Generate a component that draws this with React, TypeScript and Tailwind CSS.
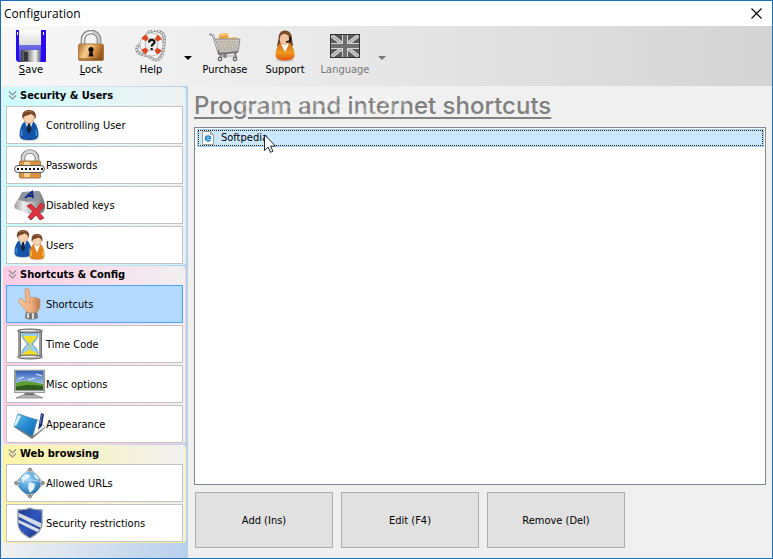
import type { ReactNode } from "react";

/* ---------- Toolbar icons ---------- */

function SaveIcon() {
  return (
    <svg width="32" height="32" viewBox="0 0 32 32">
      <defs>
        <linearGradient id="shutter" x1="0" x2="1">
          <stop offset="0" stopColor="#444" />
          <stop offset="0.45" stopColor="#999" />
          <stop offset="0.75" stopColor="#f5f5f5" />
          <stop offset="1" stopColor="#777" />
        </linearGradient>
        <linearGradient id="disk" x1="0" y1="0" x2="0" y2="1">
          <stop offset="0" stopColor="#6f6fe8" />
          <stop offset="1" stopColor="#3d3dc4" />
        </linearGradient>
        <linearGradient id="paper" x1="0" y1="0" x2="0" y2="1">
          <stop offset="0" stopColor="#fdfdfd" />
          <stop offset="1" stopColor="#dcdcdc" />
        </linearGradient>
      </defs>
      <path d="M1 0h30v32H3l-2-2z" fill="#2a08f0" />
      <path d="M4 0h22v15H4z" fill="url(#paper)" />
      <path d="M4 15h22v17H4z" fill="url(#disk)" />
      <path d="M6 20h19v12H6z" fill="url(#shutter)" />
      <path d="M9 22h4v9H9z" fill="#35353f" />
      <path d="M2 2h1v3H2zM28 2h1v3h-1z" fill="#fff" />
    </svg>
  );
}

function LockIcon() {
  return (
    <svg width="32" height="32" viewBox="0 0 32 32">
      <defs>
        <linearGradient id="brass" x1="0" y1="0" x2="1" y2="0.3">
          <stop offset="0" stopColor="#ad6927" />
          <stop offset="0.4" stopColor="#f7cc88" />
          <stop offset="0.65" stopColor="#e3a052" />
          <stop offset="1" stopColor="#99571d" />
        </linearGradient>
      </defs>
      <path d="M8 15V9.500a8 7.500 0 0 1 16 0V15" fill="none" stroke="#777" strokeWidth="4.600" />
      <path d="M8 15V9.500a8 7.500 0 0 1 16 0V15" fill="none" stroke="#c9c9c9" strokeWidth="2.800" />
      <path d="M8 14V10a7.500 7.500 0 0 1 9-7.500" fill="none" stroke="#fff" strokeWidth="1.200" />
      <rect x="3.500" y="14" width="25" height="16.500" rx="1.500" fill="url(#brass)" stroke="#a87a4a" />
      <path d="M4 29h24" stroke="#754716" />
      <circle cx="16" cy="19.500" r="2.600" fill="#111" />
      <path d="M15 20h2l1.500 6.500h-5z" fill="#111" />
    </svg>
  );
}

function HelpIcon() {
  return (
    <svg width="32" height="32" viewBox="0 0 32 32">
      <path d="M8 13c-5 2-8 5-5 9s9 2 12 5 7 4 9 2 4-4 4-8 4-14-1-18-11-3-15 1" fill="none" stroke="#929292" strokeWidth="3" />
      <path d="M8 13c-5 2-8 5-5 9s9 2 12 5 7 4 9 2 4-4 4-8 4-14-1-18-11-3-15 1" fill="none" stroke="#e8e8e8" strokeWidth="1.600" strokeDasharray="2 1" />
      <circle cx="16.500" cy="14.500" r="9" fill="#ededed" stroke="#9d9d9d" strokeWidth="5.600" />
      <circle cx="16.500" cy="14.500" r="9" fill="none" stroke="#f3f3f3" strokeWidth="4.400" />
      <circle cx="16.500" cy="14.500" r="9" fill="none" stroke="#dd4720" strokeWidth="5" strokeDasharray="5 9.137" strokeDashoffset="-4.600" />
      <path d="M14 12.500c0-3.500 5.500-3.500 5.500-.5 0 2.200-2.800 2-2.800 4.500M16.700 18v2" fill="none" stroke="#111" strokeWidth="2.200" />
    </svg>
  );
}

function PurchaseIcon() {
  return (
    <svg width="32" height="32" viewBox="0 0 32 32">
      <path d="M10 4l9-1v8h-9z" fill="#e9a23f" />
      <path d="M10 4l9-1 1 2-9 1z" fill="#f7ca78" />
      <path d="M16 8l12-1v6H16z" fill="#f2ba59" />
      <path d="M5 9h26l-2 13-19 1z" fill="#c9c6bf" stroke="#8a8a8a" strokeLinejoin="round" />
      <path d="M8 12h21M9 15h20M9 18h19M10 20h18" stroke="#96938b" strokeWidth="0.800" strokeDasharray="1.500 1" />
      <path d="M12 13h1m3 0h1m3 0h1m3 0h1M14 17h1m3 0h1m3 0h1m3 0h1" stroke="#cfa66a" strokeWidth="1.500" />
      <path d="M0 4l4 1 6 19 19-2M13 23l-2 5M26 23l1 5" fill="none" stroke="#777" strokeWidth="2" />
      <path d="M0 3.500l4 1 5 16" fill="none" stroke="#ddd" strokeWidth="1" />
      <path d="M11 26h16" stroke="#aaa" />
      <g fill="#d3d3d3" stroke="#666" strokeWidth="1.200">
        <circle cx="11" cy="29" r="1.800" />
        <circle cx="16" cy="26" r="1.300" />
        <circle cx="26" cy="29" r="1.800" />
      </g>
    </svg>
  );
}

function SupportIcon() {
  return (
    <svg width="32" height="32" viewBox="0 0 32 32">
      <defs>
        <linearGradient id="orangeCoat" x1="0" y1="0" x2="0" y2="1">
          <stop offset="0" stopColor="#c9701c" />
          <stop offset="0.55" stopColor="#f09a22" />
          <stop offset="1" stopColor="#e0560d" />
        </linearGradient>
      </defs>
      <ellipse cx="16" cy="30" rx="9" ry="1.800" fill="#aaa" opacity="0.5" />
      <path d="M9.500 9c0-5 2-8.500 6.500-8.500s7 3.500 7 8.500l1 7H8z" fill="#694027" />
      <path d="M11 13c-3 3-4.500 8-4.500 12s4 5.500 9.500 5.500 9.500-1.500 9.500-5.500-1.500-9-4.500-12z" fill="url(#orangeCoat)" />
      <path d="M12 14l4 8 4-8z" fill="#fff" />
      <ellipse cx="15.500" cy="9.500" rx="4.800" ry="6" fill="#f3c49c" />
      <path d="M10 9c1-4 2-5 6-5 3 1 5 2 6 5 0-5-2-8-6-8s-6 3-6 8z" fill="#7e4f2d" />
      <path d="M21 7v4l-4 1" fill="none" stroke="#111" strokeWidth="1.800" />
    </svg>
  );
}

function LanguageIcon() {
  return (
    <svg width="32" height="32" viewBox="0 0 32 32">
      <path d="M1 4h30v24H1z" fill="#5c5c5c" />
      <path d="M2 5l28 22M30 5L2 27" stroke="#d6d6d6" strokeWidth="3.600" />
      <path d="M2 5l28 22M30 5L2 27" stroke="#8a8a8a" strokeWidth="1" />
      <path d="M16 4v24M1 16h30" stroke="#d6d6d6" strokeWidth="6" />
      <path d="M16 4v24M1 16h30" stroke="#6f6f6f" strokeWidth="4" />
      <path d="M1.500 4.500h29v23h-29z" fill="none" stroke="#333" />
    </svg>
  );
}

/* ---------- Sidebar icons ---------- */

function PersonShape({ female = false }: { female?: boolean }) {
  return (
    <>
      <ellipse cx="10" cy="29" rx="9" ry="2" fill="#888" opacity="0.4" />
      <path d="M5 12c-3 3-4.500 8-4.500 13 0 4 4 5 9.500 5s9.500-1 9.500-5c0-5-1.500-10-4.500-13z" fill={female ? "#e6841c" : "#1453a8"} />
      <path d="M3 20c-1 3-1 4 0 6m14-6c1 3 1 4 0 6" fill="none" stroke={female ? "#f8bd59" : "#3b8bdc"} strokeWidth="1.800" />
      <path d="M6 12l4 10 4-10z" fill="#fff" />
      {!female && <path d="M9 13h2l1.500 7-2.500 4-2.500-4z" fill="#14233a" />}
      <ellipse cx="10" cy="7" rx="5.500" ry="6.500" fill="#f7d3b2" stroke="#a8683c" strokeWidth="0.600" />
      <path d="M3.500 9C2 2 6 0 10 0c5 0 8 3 6.500 9-1-3-2-4-5-5C9 6 5 5 3.500 9z" fill="#784728" />
      <path d="M6 2c2-1 5-1 7 0" fill="none" stroke="#ac7144" />
    </>
  );
}

function UserIcon() {
  return (
    <svg width="32" height="32" viewBox="0 0 32 32">
      <g transform="translate(6 1)">
        <PersonShape />
      </g>
    </svg>
  );
}

function UsersIcon() {
  return (
    <svg width="32" height="32" viewBox="0 0 32 32">
      <g transform="translate(1 1) scale(0.900)">
        <PersonShape />
      </g>
      <g transform="translate(16 5) scale(0.800 0.850)">
        <PersonShape female />
      </g>
    </svg>
  );
}

function PasswordIcon() {
  return (
    <svg width="32" height="32" viewBox="0 0 32 32">
      <path d="M10 15V9a7 6.500 0 0 1 14 0v6" fill="none" stroke="#777" strokeWidth="4.600" />
      <path d="M10 15V9a7 6.500 0 0 1 14 0v6" fill="none" stroke="#d5d5d5" strokeWidth="2.800" />
      <rect x="6.500" y="12" width="21" height="17" rx="1" fill="#d99040" stroke="#a87a4a" />
      <path d="M11 13h6v15h-6z" fill="#f7d493" />
      <rect x="1.500" y="16.500" width="30" height="7" rx="3.500" fill="#f4f4f4" stroke="#555" />
      <path d="M4 20h26" stroke="#111" strokeWidth="2" strokeDasharray="2 2" />
    </svg>
  );
}

function KeyIcon() {
  return (
    <svg width="32" height="32" viewBox="0 0 32 32">
      <defs>
        <linearGradient id="keycap" x1="0" x2="1">
          <stop offset="0" stopColor="#999" />
          <stop offset="0.3" stopColor="#eee" />
          <stop offset="0.6" stopColor="#b5b5b5" />
          <stop offset="1" stopColor="#6f6f6f" />
        </linearGradient>
      </defs>
      <path d="M9 3l17-1c2 1 5 10 6 13s-1 8-3 9l-11 2L3 20c-2-1-2-3-1-5z" fill="url(#keycap)" />
      <path d="M9 3l16-1 3 9-14 2-9-2z" fill="#8f959f" />
      <path d="M12 9l7-6 1 6m-5-2h5" fill="none" stroke="#152c86" strokeWidth="2" />
      <path d="M14 17l4-2 5 5 5-6 3 3-5 6 5 6-4 2-4-5-5 5-3-3 5-6z" fill="#dc3340" stroke="#b32430" strokeWidth="0.800" />
    </svg>
  );
}

function HandIcon() {
  return (
    <svg width="32" height="32" viewBox="0 0 32 32">
      <defs>
        <linearGradient id="skin" x1="0" x2="1">
          <stop offset="0" stopColor="#f6c6a0" />
          <stop offset="0.6" stopColor="#efad80" />
          <stop offset="1" stopColor="#bd774b" />
        </linearGradient>
      </defs>
      <path d="M13 23c3 2 8 2 11 0l1 7c-4 2-9 2-13 0z" fill="#777" />
      <path d="M15 25v5M20 25v6" stroke="#ddd" strokeWidth="2" />
      <path d="M12 2c0-2 4-2 4 0l1 8c2-1 3-1 4 0 1-1 3-1 3 1 2-1 3 0 3 2 0 5 0 8-3 11-4 1-7 1-10 0-2-4-8-7-8-12 0-2 3-2 4 0l3 3z" fill="url(#skin)" stroke="#c58a62" strokeWidth="0.700" />
      <path d="M17 12v4m4-4v4m3-3v4" stroke="#c58a62" strokeWidth="0.900" />
    </svg>
  );
}

function HourglassIcon() {
  return (
    <svg width="32" height="32" viewBox="0 0 32 32">
      <path d="M6.500 3v26M27.500 3v26" stroke="#6a6a6a" strokeWidth="3" />
      <path d="M6 3v26M27 3v26" stroke="#ccc" strokeWidth="1" />
      <path d="M9 4h16c0 7-3 9-6 12 3 3 6 5 6 12H9c0-7 3-9 6-12-3-3-6-5-6-12z" fill="#9bd1ee" stroke="#5792b5" />
      <path d="M10 8h14c-1 3-4 5-7 8-3-3-6-5-7-8zM9 28c0-3 4-5 8-6 4 1 8 3 8 6z" fill="#f8df27" />
      <path d="M17 15v7" stroke="#e9c519" />
      <ellipse cx="17" cy="3" rx="12.500" ry="2" fill="#aaa" stroke="#666" />
      <ellipse cx="17" cy="29" rx="12.500" ry="2" fill="#bbb" stroke="#666" />
      <path d="M8 2.500h14M8 28.500h14" stroke="#eee" />
    </svg>
  );
}

function MonitorIcon() {
  return (
    <svg width="32" height="32" viewBox="0 0 32 32">
      <defs>
        <linearGradient id="sky" x1="0" y1="0" x2="0" y2="1">
          <stop offset="0" stopColor="#315eb8" />
          <stop offset="0.7" stopColor="#a9c8ee" />
        </linearGradient>
      </defs>
      <path d="M1 1h31v24H1z" fill="#9a9a9a" />
      <path d="M3 3h27v19H3z" fill="url(#sky)" />
      <path d="M3 15c7-3 15-2 27 1v6H3z" fill="#5d9e30" />
      <path d="M3 19c10-3 17-2 27-1v4H3z" fill="#2d5a1f" />
      <path d="M5 11l6-2m4 3l7-2m1-4l6 2" stroke="#dfeaf8" strokeWidth="1.200" />
      <path d="M1 1.500h31M2 23.500h29" stroke="#ddd" />
      <path d="M12 25h9l2 3H10z" fill="#777" />
      <path d="M3 30l7-3h13l7 3z" fill="#bbb" stroke="#777" strokeWidth="0.700" />
    </svg>
  );
}

function AppearanceIcon() {
  return (
    <svg width="32" height="32" viewBox="0 0 32 32">
      <defs>
        <linearGradient id="cover" x1="0" y1="0" x2="1" y2="1">
          <stop offset="0" stopColor="#65c5ee" />
          <stop offset="0.5" stopColor="#278bd0" />
          <stop offset="1" stopColor="#1264ad" />
        </linearGradient>
      </defs>
      <path d="M1 19l18 12 13-11-6-5z" fill="#7a7a7a" />
      <path d="M24 11l8 8-12 9z" fill="#fff" stroke="#999" strokeWidth="0.700" />
      <path d="M5 6l19 6-5 16L1 18z" fill="url(#cover)" stroke="#2a7cba" strokeWidth="0.800" />
      <path d="M5 7l3 1-5 10-2-1z" fill="#d8f2ff" />
      <path d="M28 5l3 1-2 12-4 4 1-6z" fill="#1d3477" />
      <path d="M29 6l-2 10" stroke="#657dc4" />
    </svg>
  );
}

function GlobeIcon() {
  return (
    <svg width="32" height="32" viewBox="0 0 32 32">
      <defs>
        <radialGradient id="globe" cx="0.400" cy="0.300" r="0.750">
          <stop offset="0" stopColor="#9ed9fa" />
          <stop offset="0.6" stopColor="#4f9fd8" />
          <stop offset="1" stopColor="#2a6ba3" />
        </radialGradient>
      </defs>
      <path d="M17 1l14 15-14 15L2 16z" fill="#c4c4c4" stroke="#9a9a9a" />
      <circle cx="16.500" cy="16" r="11" fill="url(#globe)" />
      <path d="M8 11l5-4 4 1-1 3-4 2-2 3zm8 4l6 2-1 5-4 4-2-5zm4-8l4 2 2 4-3-1z" fill="#e3f3fb" />
      <path d="M17 2c-8 7-13 14-14 14 8-4 20-4 27 0C28 13 24 8 17 2" fill="none" stroke="#cfdbe3" strokeWidth="0.900" />
      <g fill="#bbb" stroke="#666" strokeWidth="0.900">
        <circle cx="17" cy="2.500" r="1.400" />
        <circle cx="3" cy="16" r="1.400" />
        <circle cx="30" cy="16" r="1.400" />
        <circle cx="17" cy="29.500" r="1.400" />
      </g>
    </svg>
  );
}

function ShieldIcon() {
  return (
    <svg width="32" height="32" viewBox="0 0 32 32">
      <defs>
        <linearGradient id="shield" x1="0" y1="0" x2="1" y2="1">
          <stop offset="0" stopColor="#1b3480" />
          <stop offset="0.5" stopColor="#3158c0" />
          <stop offset="1" stopColor="#152d70" />
        </linearGradient>
        <clipPath id="shieldClip">
          <path d="M5 3c5 0 8 0 12-2 4 2 7 2 12 2v13c0 7-4 11-12 15C9 27 5 23 5 16z" />
        </clipPath>
      </defs>
      <g clipPath="url(#shieldClip)">
        <path d="M4 0h26v32H4z" fill="url(#shield)" />
        <path d="M4 5l26 12v5L4 9zM4 12l26 12v4L4 15z" fill="#d5dce6" />
      </g>
      <path d="M5 3c5 0 8 0 12-2 4 2 7 2 12 2v13c0 7-4 11-12 15C9 27 5 23 5 16z" fill="none" stroke="#8c97a8" strokeWidth="1.300" />
    </svg>
  );
}

/* ---------- Small glyphs ---------- */

function Chevrons() {
  return (
    <svg width="9" height="9" viewBox="0 0 9 9" fill="none" stroke="#8e8e8e" strokeWidth="1.200">
      <path d="M1 0.500L4.500 4 8 0.500M1 4.500L4.500 8 8 4.500" />
    </svg>
  );
}

function PageIcon() {
  return (
    <svg width="12" height="14" viewBox="0 0 12 14">
      <path d="M0.500 0.500h8l3 3v10h-11z" fill="#fff" stroke="#a0a0a0" />
      <path d="M8.500 0.500v3h3" fill="none" stroke="#a0a0a0" />
      <path d="M3.500 7.500h5c0-3.500-5-3.500-5 0 0 2.500 3 3 4.800 1.700" fill="none" stroke="#1683d8" strokeWidth="1.500" />
    </svg>
  );
}

function Pointer() {
  return (
    <svg className="absolute top-1 left-full -ml-1 z-10" width="12" height="19" viewBox="0 0 12 19">
      <path d="M0.500 0.800v15.700l3.600-3.400 2.400 5.200 2.400-1-2.300-5.200h4.900z" fill="#fff" stroke="#1c2433" />
    </svg>
  );
}

/* ---------- Layout pieces ---------- */

type ToolProps = { icon: ReactNode; children: ReactNode; disabled?: boolean };

function Tool({ icon, children, disabled }: ToolProps) {
  return (
    <button disabled={disabled} className="w-15 flex flex-col items-center pt-1 disabled:text-[#777]">
      {icon}
      <span>{children}</span>
    </button>
  );
}

function DropArrow({ label, className }: { label: string; className: string }) {
  return (
    <button aria-label={label} className={`w-3.5 flex justify-center items-center ${className}`}>
      <svg width="8" height="4" viewBox="0 0 8 4" fill="currentColor">
        <path d="M0 0h8L4 4z" />
      </svg>
    </button>
  );
}

type Item = { label: string; icon: ReactNode; active?: boolean };
type Group = { title: string; tone: string; items: Item[] };

const groups: Group[] = [
  {
    title: "Security & Users",
    tone: "from-[#ccfdff] border-[#ccf8fc]",
    items: [
      { label: "Controlling User", icon: <UserIcon /> },
      { label: "Passwords", icon: <PasswordIcon /> },
      { label: "Disabled keys", icon: <KeyIcon /> },
      { label: "Users", icon: <UsersIcon /> },
    ],
  },
  {
    title: "Shortcuts & Config",
    tone: "from-[#ffcce4] border-[#fbcce2]",
    items: [
      { label: "Shortcuts", icon: <HandIcon />, active: true },
      { label: "Time Code", icon: <HourglassIcon /> },
      { label: "Misc options", icon: <MonitorIcon /> },
      { label: "Appearance", icon: <AppearanceIcon /> },
    ],
  },
  {
    title: "Web browsing",
    tone: "from-[#fdf4a5] border-[#fbee9c]",
    items: [
      { label: "Allowed URLs", icon: <GlobeIcon /> },
      { label: "Security restrictions", icon: <ShieldIcon /> },
    ],
  },
];

function Sidebar() {
  return (
    <nav className="w-[187px] shrink-0 flex flex-col gap-px pt-px px-0.5 bg-linear-to-r from-[#f0f0f0] to-[#b8d0ec]">
      {groups.map((group) => (
        <section key={group.title} className={`rounded border-x border-b px-0.5 bg-linear-to-r to-[#f0f0f0] ${group.tone}`}>
          <h2 className="h-[19px] flex items-center gap-[3px] pl-0.5 pb-0.5 font-bold">
            <Chevrons />
            {group.title}
          </h2>
          <div className="flex flex-col gap-0.5">
            {group.items.map((item) => (
              <button
                key={item.label}
                className={`h-[38px] flex items-center pl-1.5 border ${
                  item.active ? "bg-[#b3d9ff] border-[#4da3f5]" : "bg-white border-[#c3c3c3]"
                }`}
              >
                {item.icon}
                <span className="pl-px pt-0.5">{item.label}</span>
              </button>
            ))}
          </div>
        </section>
      ))}
    </nav>
  );
}

export default function App() {
  return (
    <div className="min-h-screen flex flex-col border border-[#1a70b8] bg-[#f0f0f0] text-black text-[11px] leading-4 font-['DejaVu_Sans_Condensed','DejaVu_Sans',sans-serif]">
      {/* Title bar */}
      <header className="h-[25px] flex items-center justify-between bg-white pl-[3px] pr-1.5">
        <h1 className="text-[12px] font-['Open_Sans',sans-serif]">Configuration</h1>
        <button aria-label="Close" className="p-1">
          <svg width="11" height="11" viewBox="0 0 11 11" stroke="#000" strokeWidth="1.100">
            <path d="M0.500 0.500l10 10M10.500 0.500l-10 10" />
          </svg>
        </button>
      </header>

      {/* Toolbar */}
      <div className="h-15 flex items-start bg-linear-to-r from-[#f8f8f8] to-[#d4d4d4]">
        <Tool icon={<SaveIcon />}><u>S</u>ave</Tool>
        <Tool icon={<LockIcon />}><u>L</u>ock</Tool>
        <Tool icon={<HelpIcon />}>Help</Tool>
        <DropArrow label="More help" className="h-16" />
        <Tool icon={<PurchaseIcon />}>Purchase</Tool>
        <Tool icon={<SupportIcon />}>Support</Tool>
        <Tool icon={<LanguageIcon />} disabled>Language</Tool>
        <DropArrow label="Choose language" className="h-16 text-[#777]" />
      </div>

      <div className="flex-1 flex">
        <Sidebar />

        <main className="flex-1 flex flex-col pl-1.5 pr-1.5 pt-1.5 pb-2.5">
          <h2 className="relative h-[35px] text-[24px] leading-7 font-medium text-[#808080] font-['Inter',sans-serif] underline decoration-2 underline-offset-3">
            Program and internet shortcuts
            <span aria-hidden="true" className="absolute left-11 top-0 inline-block text-[28px] font-bold text-white/30 font-['Liberation_Sans',sans-serif] pointer-events-none">
              SOFTPEDIA<sup className="text-[12px]">®</sup>
            </span>
          </h2>

          <ul className="flex-1 bg-white border border-[#828790] py-px pl-0.5 pr-px">
            <li className="bg-[#cce8ff] border border-[#99d1ff]">
              <button className="w-full h-4 flex items-center gap-[7px] pl-[3px] border border-dotted border-[#3a1c00]">
                <PageIcon />
                <span className="relative">
                  Softpedia
                  <Pointer />
                </span>
              </button>
            </li>
          </ul>

          <div className="flex gap-2 pt-[7px] pl-px">
            {["Add (Ins)", "Edit (F4)", "Remove (Del)"].map((label) => (
              <button key={label} className="w-[138px] h-14 pt-0.5 bg-[#e1e1e1] border border-[#adadad]">
                {label}
              </button>
            ))}
          </div>
        </main>
      </div>
    </div>
  );
}
